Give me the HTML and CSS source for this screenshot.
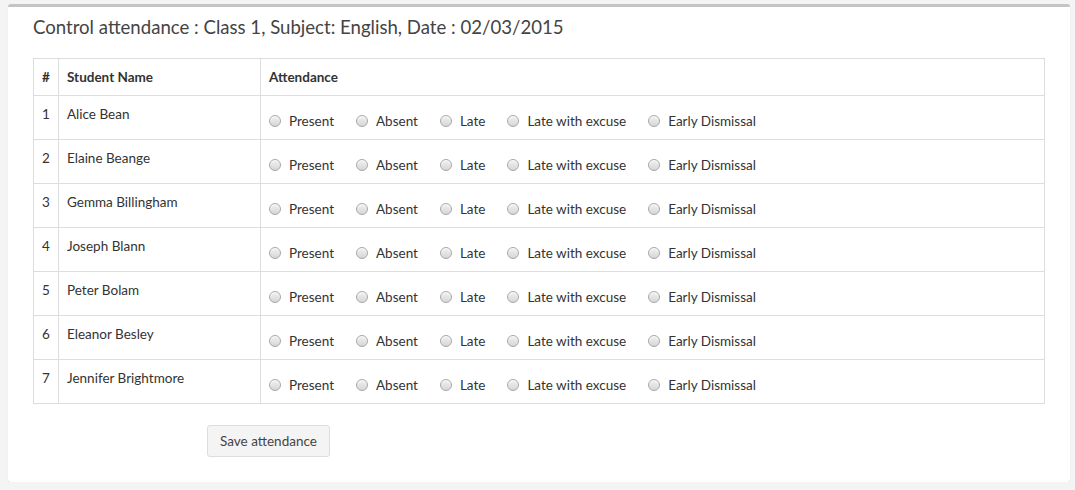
FILE: index.html
```html
<!DOCTYPE html>
<html>
<head>
<meta charset="utf-8">
<link rel="stylesheet" href="styles.css">
</head>
<body>
<div class="wrapper">
  <section class="box">
    <div class="box-header">
      <h3 class="box-title">Control attendance : Class 1, Subject: English, Date : 02/03/2015</h3>
    </div>
    <div class="box-body">
      <table class="att-table">
        <thead>
          <tr><th class="c-num">#</th><th class="c-name">Student Name</th><th>Attendance</th></tr>
        </thead>
        <tbody>
          <tr><td>1</td><td>Alice Bean</td><td><div class="opts"><label class="opt"><input type="radio" name="s1"><span>Present</span></label><label class="opt"><input type="radio" name="s1"><span>Absent</span></label><label class="opt"><input type="radio" name="s1"><span>Late</span></label><label class="opt"><input type="radio" name="s1"><span>Late with excuse</span></label><label class="opt"><input type="radio" name="s1"><span>Early Dismissal</span></label></div></td></tr>
          <tr><td>2</td><td>Elaine Beange</td><td><div class="opts"><label class="opt"><input type="radio" name="s2"><span>Present</span></label><label class="opt"><input type="radio" name="s2"><span>Absent</span></label><label class="opt"><input type="radio" name="s2"><span>Late</span></label><label class="opt"><input type="radio" name="s2"><span>Late with excuse</span></label><label class="opt"><input type="radio" name="s2"><span>Early Dismissal</span></label></div></td></tr>
          <tr><td>3</td><td>Gemma Billingham</td><td><div class="opts"><label class="opt"><input type="radio" name="s3"><span>Present</span></label><label class="opt"><input type="radio" name="s3"><span>Absent</span></label><label class="opt"><input type="radio" name="s3"><span>Late</span></label><label class="opt"><input type="radio" name="s3"><span>Late with excuse</span></label><label class="opt"><input type="radio" name="s3"><span>Early Dismissal</span></label></div></td></tr>
          <tr><td>4</td><td>Joseph Blann</td><td><div class="opts"><label class="opt"><input type="radio" name="s4"><span>Present</span></label><label class="opt"><input type="radio" name="s4"><span>Absent</span></label><label class="opt"><input type="radio" name="s4"><span>Late</span></label><label class="opt"><input type="radio" name="s4"><span>Late with excuse</span></label><label class="opt"><input type="radio" name="s4"><span>Early Dismissal</span></label></div></td></tr>
          <tr><td>5</td><td>Peter Bolam</td><td><div class="opts"><label class="opt"><input type="radio" name="s5"><span>Present</span></label><label class="opt"><input type="radio" name="s5"><span>Absent</span></label><label class="opt"><input type="radio" name="s5"><span>Late</span></label><label class="opt"><input type="radio" name="s5"><span>Late with excuse</span></label><label class="opt"><input type="radio" name="s5"><span>Early Dismissal</span></label></div></td></tr>
          <tr><td>6</td><td>Eleanor Besley</td><td><div class="opts"><label class="opt"><input type="radio" name="s6"><span>Present</span></label><label class="opt"><input type="radio" name="s6"><span>Absent</span></label><label class="opt"><input type="radio" name="s6"><span>Late</span></label><label class="opt"><input type="radio" name="s6"><span>Late with excuse</span></label><label class="opt"><input type="radio" name="s6"><span>Early Dismissal</span></label></div></td></tr>
          <tr><td>7</td><td>Jennifer Brightmore</td><td><div class="opts"><label class="opt"><input type="radio" name="s7"><span>Present</span></label><label class="opt"><input type="radio" name="s7"><span>Absent</span></label><label class="opt"><input type="radio" name="s7"><span>Late</span></label><label class="opt"><input type="radio" name="s7"><span>Late with excuse</span></label><label class="opt"><input type="radio" name="s7"><span>Early Dismissal</span></label></div></td></tr>
        </tbody>
      </table>
      <div class="actions">
        <button class="btn" type="button">Save attendance</button>
      </div>
    </div>
  </section>
</div>
</body>
</html>
```

FILE: styles.css
```css
* { box-sizing: border-box; }
html, body { margin: 0; padding: 0; }
body {
  background: #f4f4f4;
  font-family: Lato, "Liberation Sans", sans-serif;
  font-size: 13.5px;
  line-height: 20px;
  color: #333;
}
.wrapper {
  padding: 4px 5px 0 8px;
}
.box {
  background: #fff;
  border-top: 3px solid #c4c4c4;
  border-radius: 3px;
  box-shadow: 0 1px 1px rgba(0,0,0,0.1);
  padding-bottom: 25px;
}
.box-header {
  padding: 10px 25px 0 25px;
}
.box-title {
  margin: 0;
  font-size: 18.6px;
  font-weight: 400;
  line-height: 20px;
  color: #444;
}
.box-body {
  padding: 21px 25px 0 25px;
}
.att-table {
  width: 100%;
  border-collapse: collapse;
  border: 1px solid #ddd;
}
.att-table th, .att-table td {
  border: 1px solid #ddd;
  padding: 8px;
  text-align: left;
  vertical-align: top;
  line-height: 20px;
}
.att-table th {
  font-weight: 700;
  font-size: 13.5px;
  color: #333;
}
.c-num { width: 25px; }
.c-name { width: 202px; }
.opts {
  display: flex;
  gap: 22px;
  padding-top: 7px;
}
.opt {
  display: flex;
  align-items: center;
  gap: 8px;
  color: #333;
  white-space: nowrap;
}
.opt input {
  appearance: none;
  -webkit-appearance: none;
  width: 12px;
  height: 12px;
  margin: 0;
  border-radius: 50%;
  border: 1px solid #a9a9a9;
  background: linear-gradient(#f2f2f2, #d6d6d6);
  box-shadow: inset 0 1px 1px rgba(255,255,255,0.8);
}
.actions {
  padding-top: 21px;
  padding-left: 174px;
}
.btn {
  font-family: inherit;
  font-size: 13.5px;
  line-height: 20px;
  color: #444;
  background: #f4f4f4;
  border: 1px solid #ddd;
  border-radius: 3px;
  padding: 5px 12px;
  white-space: nowrap;
}
```
